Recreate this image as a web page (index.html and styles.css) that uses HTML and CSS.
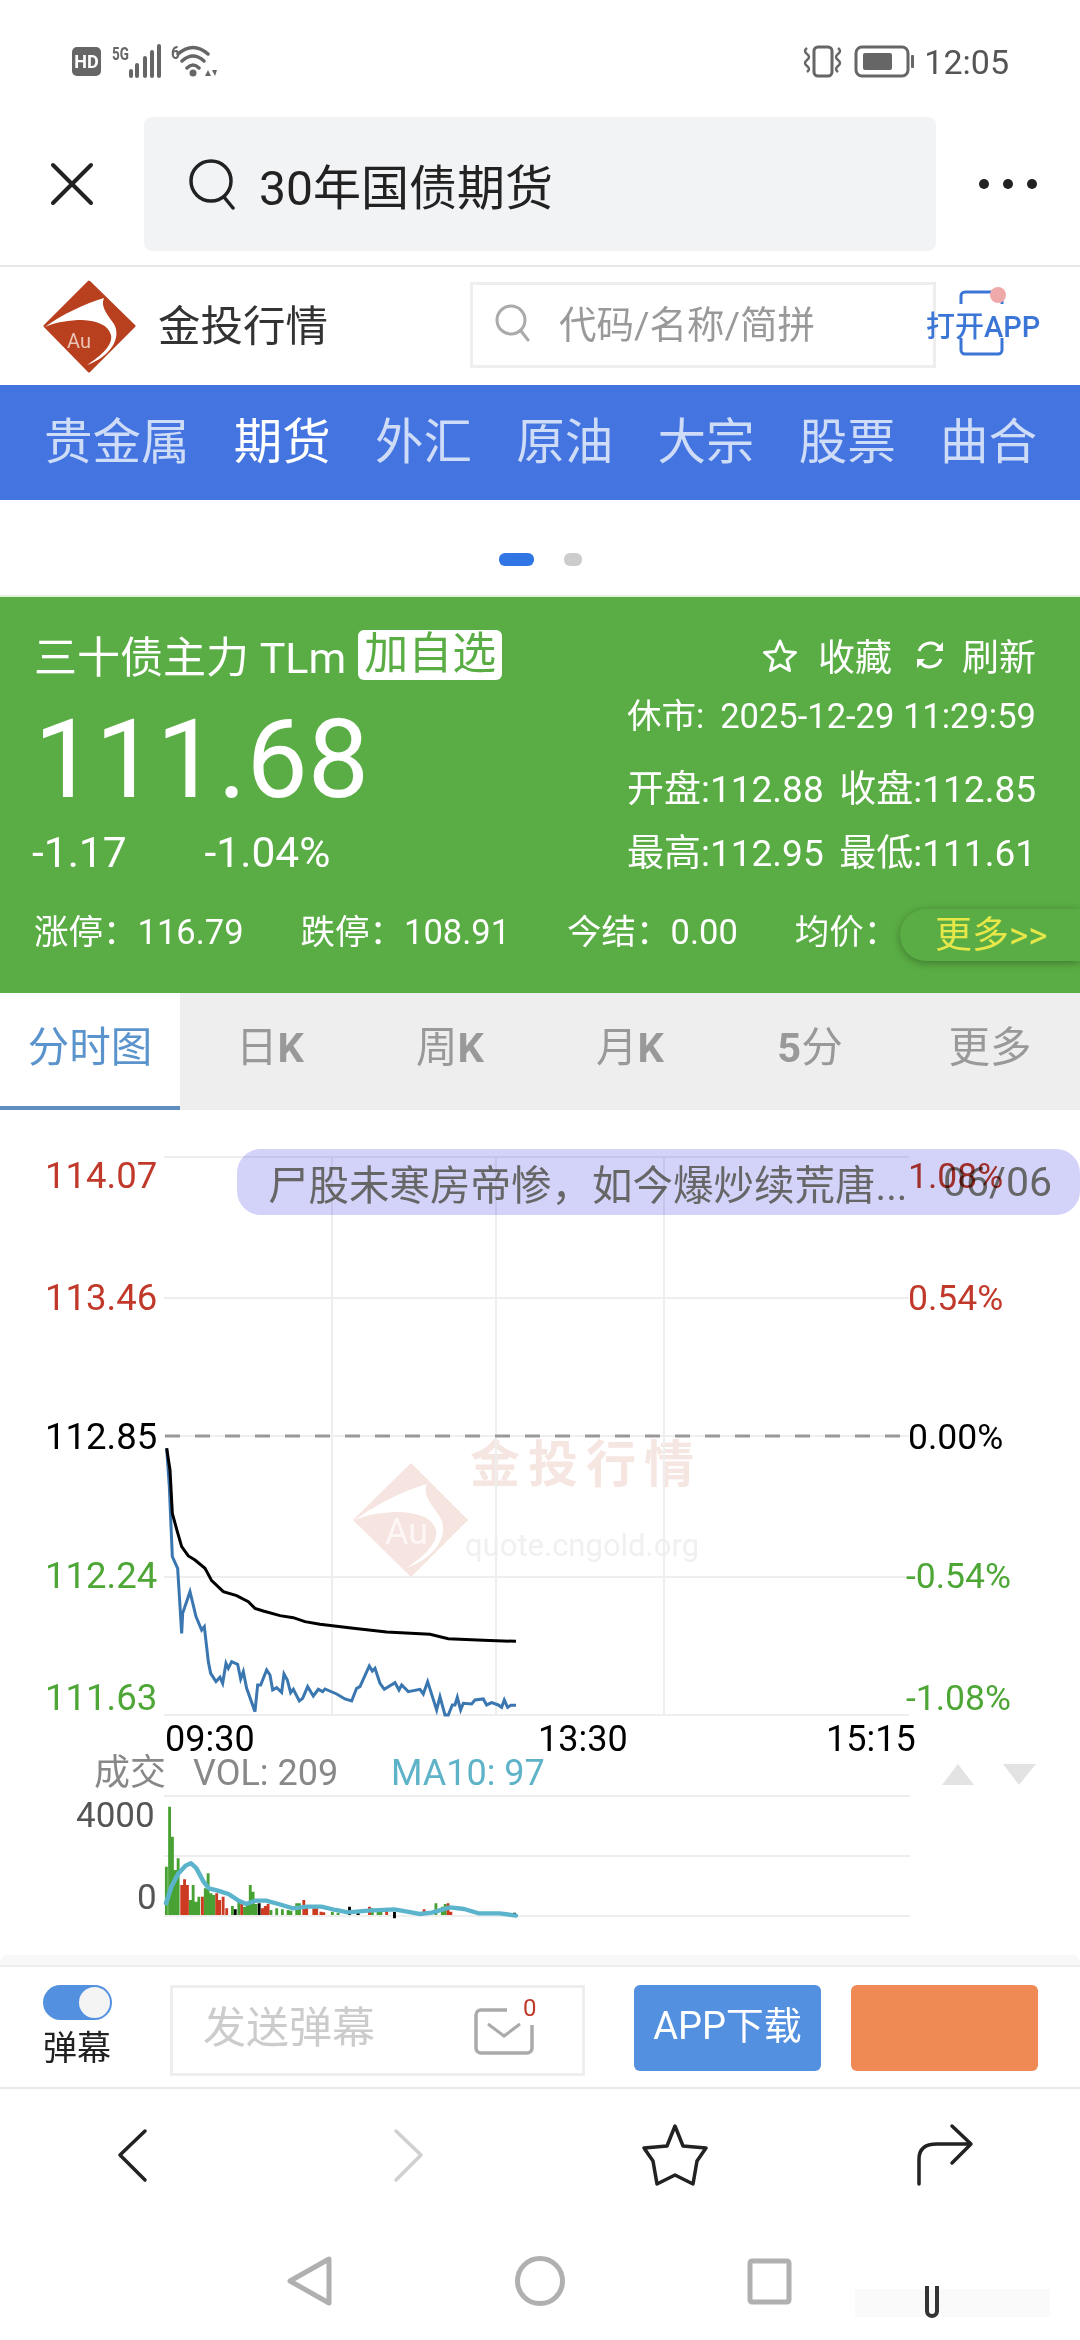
FILE: index.html
```html
<!DOCTYPE html>
<html lang="zh-CN">
<head>
  <meta charset="UTF-8">
  <meta name="viewport" content="width=device-width, initial-scale=1.0">
  <title>30年国债期货</title>
  <link rel="stylesheet" href="styles.css">
</head>
<body>
  <!-- status bar -->
  <div class="status">
    <svg class="status-left" width="146" height="36" viewBox="0 0 146 36">
      <rect x="1" y="3" width="29" height="29" rx="5" fill="#666"/>
      <text x="15.5" y="24" class="st-hd">HD</text>
      <text transform="translate(41 16) scale(.75 1)" class="st-small">5G</text>
      <path d="M60 27v5M66 21v11M74 14v18M81 8v24M88 2v30" stroke="#666" stroke-width="4" stroke-linecap="round" fill="none"/>
      <text transform="translate(100 15) scale(.85 1)" class="st-small">6</text>
      <path d="M107 10Q122-3 137 10M111 17Q122 7 133 17M116 24Q122 18 128 24" stroke="#666" stroke-width="3.5" stroke-linecap="round" fill="none"/>
      <circle cx="122" cy="29" r="3.5" fill="#666"/>
      <path d="M134 32l3-6 3 6zM141 26l3 6 2-6z" fill="#666"/>
    </svg>
    <svg class="status-right" width="114" height="36" viewBox="0 0 114 36">
      <rect x="12" y="3" width="18" height="29" rx="4" fill="none" stroke="#666" stroke-width="3"/>
      <path d="M5 4q-4 3 0 6t0 6 0 6 0 6M36 4q4 3 0 6t0 6 0 6 0 6" fill="none" stroke="#666" stroke-width="2.5"/>
      <rect x="54" y="3" width="52" height="29" rx="6" fill="none" stroke="#666" stroke-width="3"/>
      <rect x="61" y="9" width="29" height="17" rx="2" fill="#666"/>
      <rect x="109" y="11" width="3" height="13" rx="1" fill="#666"/>
    </svg>
    <span class="clock">12:05</span>
  </div>

  <!-- browser bar -->
  <div class="browser">
    <div class="browser-side">
      <svg width="44" height="44" viewBox="0 0 44 44"><path d="M3 3L41 41M41 3L3 41" stroke="#222" stroke-width="4" stroke-linecap="round"/></svg>
    </div>
    <div class="browser-search">
      <svg width="48" height="52" viewBox="0 0 48 52"><circle cx="22" cy="23" r="20" fill="none" stroke="#222" stroke-width="3.5"/><path d="M35 39L44 50" stroke="#222" stroke-width="3.5" stroke-linecap="round"/></svg>
      <span>30年国债期货</span>
    </div>
    <div class="browser-side">
      <svg width="60" height="12" viewBox="0 0 60 12"><circle cx="6" cy="6" r="5" fill="#222"/><circle cx="30" cy="6" r="5" fill="#222"/><circle cx="54" cy="6" r="5" fill="#222"/></svg>
    </div>
  </div>

  <!-- site header -->
  <div class="site">
    <svg class="site-logo" width="95" height="93" viewBox="0 0 95 93">
      <path d="M47 2L92 46 47 91 3 46z" fill="#b8401f" stroke="#b8401f" stroke-width="3" stroke-linejoin="round"/>
      <path d="M3 47C19 35 44 23 62 18 58 27 66 35 72 44 80 58 68 77 45 85 60 75 71 65 69 55 66 45 56 41 40 40 28 40 14 42 3 47Z" fill="#fff"/>
      <text x="25" y="68" class="logo-au">Au</text>
    </svg>
    <span class="site-name">金投行情</span>
    <div class="site-search">
      <svg width="36" height="38" viewBox="0 0 36 38"><circle cx="16" cy="16" r="14" fill="none" stroke="#aaa" stroke-width="3"/><path d="M26 27L33 36" stroke="#aaa" stroke-width="3" stroke-linecap="round"/></svg>
      <span>代码/名称/简拼</span>
    </div>
    <div class="open-app">
      <svg class="open-frame" width="52" height="72" viewBox="0 0 52 72">
        <path d="M5 18V10a4 4 0 0 1 4-4H42a4 4 0 0 1 4 4V18M5 52V64a4 4 0 0 0 4 4H42a4 4 0 0 0 4-4V52" fill="none" stroke="#3b76d6" stroke-width="3"/>
        <circle cx="42" cy="9" r="8" fill="#f0a9a9"/>
      </svg>
      <span>打开APP</span>
    </div>
  </div>

  <!-- channels -->
  <div class="channels">
    <span>贵金属</span>
    <span class="on">期货</span>
    <span>外汇</span>
    <span>原油</span>
    <span>大宗</span>
    <span>股票</span>
    <span>曲合</span>
  </div>

  <div class="pager"><i class="pager-on"></i><i class="pager-off"></i></div>

  <!-- quote panel -->
  <div class="quote">
    <div class="q-top">
      <span class="q-title">三十债主力 TLm</span>
      <span class="q-add">加自选</span>
      <div class="q-actions">
        <svg width="36" height="34" viewBox="0 0 36 34"><path d="M18 3l4.500 10.500 11 1-8.500 7.500 2.500 10.500L18 27l-9.500 5.500L11 22l-8.500-7.500 11-1z" fill="none" stroke="#fff" stroke-width="3" stroke-linejoin="round"/></svg>
        <span class="q-act-text">收藏</span>
        <svg class="q-refresh" width="32" height="32" viewBox="0 0 32 32"><path d="M5 12A12 12 0 0 1 26 9M27 20A12 12 0 0 1 6 23" fill="none" stroke="#fff" stroke-width="3"/><path d="M29 3v9h-8zM3 29v-9h8z" fill="#fff"/></svg>
        <span class="q-act-text">刷新</span>
      </div>
    </div>
    <div class="q-main">
      <div class="q-left">
        <div class="q-price">111.68</div>
        <div class="q-change"><span>-1.17</span><span>-1.04%</span></div>
      </div>
      <div class="q-stats">
        <div class="q-row q-time"><span>休市:</span><span>2025-12-29 11:29:59</span></div>
        <div class="q-row q-open"><span>开盘:112.88</span><span>收盘:112.85</span></div>
        <div class="q-row q-high"><span>最高:112.95</span><span>最低:111.61</span></div>
      </div>
    </div>
    <div class="q-bottom">
      <span>涨停：116.79</span>
      <span>跌停：108.91</span>
      <span>今结：0.00</span>
      <span>均价：</span>
    </div>
    <div class="q-more">更多&gt;&gt;</div>
  </div>

  <!-- period tabs -->
  <div class="tabs">
    <div class="tab active">分时图</div>
    <div class="tab">日<b>K</b></div>
    <div class="tab">周<b>K</b></div>
    <div class="tab">月<b>K</b></div>
    <div class="tab"><b>5</b>分</div>
    <div class="tab">更多</div>
  </div>

  <!-- chart -->
  <div class="chart">
    <svg class="chart-svg" width="1080" height="855" viewBox="0 1110 1080 855">
      <!-- watermark -->
      <path d="M411 1463L468 1520 411 1577 353 1520z" fill="#f6e4e0"/>
      <path d="M355 1520C375 1505 405 1490 427 1484 422 1495 432 1505 440 1517 450 1535 435 1558 407 1568 425 1555 438 1543 436 1530 432 1518 420 1513 400 1512 385 1512 368 1514 355 1520Z" fill="#fff"/>
      <text x="385" y="1544" class="wm-au">Au</text>
      <text x="470" y="1482" class="wm-name">金投行情</text>
      <text x="465" y="1556" class="wm-url">quote.cngold.org</text>

      <!-- grid -->
      <path d="M164 1157H909M164 1298H909M164 1436H909M164 1577H909M164 1715H909M332 1157V1715M496 1157V1715M664 1157V1715" class="grid"/>
      <path d="M165 1436H905" class="zero-line"/>

      <!-- price labels -->
      <text x="45" y="1188" class="lbl red">114.07</text>
      <text x="45" y="1310" class="lbl red">113.46</text>
      <text x="45" y="1449" class="lbl black">112.85</text>
      <text x="45" y="1588" class="lbl green">112.24</text>
      <text x="45" y="1710" class="lbl green">111.63</text>
      <text x="908" y="1188" class="lbl pct red">1.08%</text>
      <text x="908" y="1310" class="lbl pct red">0.54%</text>
      <text x="908" y="1449" class="lbl pct black">0.00%</text>
      <text x="906" y="1588" class="lbl pct green">-0.54%</text>
      <text x="906" y="1710" class="lbl pct green">-1.08%</text>

      <!-- price lines -->
      <g transform="translate(140 1420) scale(.3333)">
        <polyline class="line-price" points="80,85 88,200 97,410 113,445 125,640 128,580 150,515 168,590 185,630 193,620 205,725 212,760 228,785 240,772 248,790 258,730 265,745 275,725 293,733 302,777 310,755 320,805 345,875 353,795 362,795 380,750 390,765 398,810 410,803 425,817 432,762 442,780 452,818 460,808 478,843 488,835 503,800 520,828 535,808 548,815 555,807 590,822 615,837 635,843 650,805 660,800 688,738 697,753 705,745 720,790 733,808 765,788 777,810 785,795 805,815 840,808 850,822 863,785 890,870 900,830 915,885 925,885 937,855 945,855 952,832 962,870 970,850 995,852 1005,840 1030,837 1040,855 1055,848 1075,855 1085,862 1093,840 1103,862 1113,856 1128,856"/>
        <polyline class="line-avg" points="80,85 90,150 97,280 112,335 125,380 145,408 165,420 195,445 215,482 250,515 290,527 325,545 345,565 370,573 420,587 460,593 495,605 540,613 640,625 740,636 870,643 925,656 1030,661 1128,664"/>
      </g>

      <!-- time axis -->
      <text x="165" y="1751" class="time">09:30</text>
      <text x="538" y="1751" class="time">13:30</text>
      <text x="826" y="1751" class="time">15:15</text>

      <!-- volume -->
      <text x="94" y="1785" class="vol-head">成交</text>
      <text x="193" y="1785" class="vol-head">VOL: 209</text>
      <text x="391" y="1785" class="vol-head teal">MA10: 97</text>
      <path d="M942 1785L958 1764 974 1785zM1003 1764L1019 1785 1036 1764z" fill="#e3e3e3"/>
      <path d="M164 1796H910M164 1856H910M164 1916H910" class="grid"/>
      <text x="76" y="1827" class="vol-lbl">4000</text>
      <text x="137" y="1909" class="vol-lbl">0</text>
      <g transform="translate(0 1700) scale(.357 .3333)">
        <path class="bar bar-g" d="M466 500V645M475 320V645M483 410V645M491 510V645M499 475V645M533 600V645M541 555V645M549 605V645M557 590V645M575 565V645M583 520V645M591 580V645M599 585V645M651 618V645M669 605V645M685 620V645M693 612V645M701 555V645M709 575V645M717 612V645M759 630V645M775 625V645M791 628V645M807 630V645M815 632V645M831 610V645M839 610V645M931 635V645M947 638V645M1003 635V645M1043 625V645M1059 628V645M1067 630V645M1203 640V645M1221 610V645M1239 620V645M1247 612V645"/>
        <path class="bar bar-r" d="M509 555V645M517 538V645M525 555V645M567 590V645M607 580V645M615 600V645M625 590V645M635 625V645M677 612V645M735 625V645M743 618V645M751 612V645M851 600V645M859 620V645M879 625V645M887 625V645M899 635V645M907 637V645M1035 620V645M1083 632V645M1188 628V645M1255 610V645M1263 635V645"/>
        <path class="bar bar-k" d="M659 628V645M726 610V645M979 620V645M1003 640V645M1105 636V655M1441 638V645"/>
        <polyline class="line-ma" points="465,610 480,560 500,520 520,497 535,490 550,505 570,545 585,565 610,572 640,582 670,603 690,612 715,602 745,602 780,612 820,625 860,620 900,620 940,630 975,637 1030,632 1105,628 1140,635 1175,642 1210,638 1260,622 1300,627 1340,640 1400,640 1445,647"/>
      </g>
    </svg>
    <div class="danmaku">
      <span class="danmaku-text">尸股未寒房帝惨，如今爆炒续荒唐...</span>
      <span class="danmaku-date">06/06</span>
    </div>
    <div class="chart-edge"></div>
  </div>

  <!-- action bar -->
  <div class="action">
    <div class="barrage">
      <span class="switch"><i></i></span>
      <span class="barrage-text">弹幕</span>
    </div>
    <div class="send">
      <span class="send-hint">发送弹幕</span>
      <svg class="send-mail" width="64" height="62" viewBox="0 0 64 62">
        <path d="M34 15H8a5 5 0 0 0-5 5V53a5 5 0 0 0 5 5H54a5 5 0 0 0 5-5V30" fill="none" stroke="#aaa" stroke-width="3.500"/>
        <path d="M15 29L31 41 47 29" fill="none" stroke="#aaa" stroke-width="3"/>
        <text x="50" y="21" class="mail-count">0</text>
      </svg>
    </div>
    <div class="btn btn-blue">APP下载</div>
    <div class="btn btn-orange"></div>
  </div>

  <!-- browser toolbar -->
  <div class="toolbar">
    <svg width="1080" height="132" viewBox="0 2090 1080 132">
      <path d="M145 2132L120 2156 145 2181" class="tool"/>
      <path d="M396 2132L421 2156 396 2181" class="tool tool-off"/>
      <path d="M675 2127L683 2147 706 2149 697 2162 693 2185 675 2176 657 2185 653 2162 644 2149 667 2147z" class="tool"/>
      <path d="M919 2185V2160Q919 2145 937 2145H971M952 2127L971 2145 952 2164" class="tool"/>
    </svg>
  </div>

  <!-- system navigation -->
  <div class="sysnav">
    <svg width="1080" height="118" viewBox="0 2222 1080 118">
      <path d="M329 2260V2304L290 2282z" class="sys"/>
      <circle cx="540" cy="2282" r="22.500" class="sys"/>
      <rect x="750" y="2262" width="39" height="41" rx="2" class="sys"/>
      <path d="M855 2290H1050V2318H855z" fill="#fafafa"/>
      <path d="M927 2287V2312a5 5 0 0 0 10 0V2287" fill="none" stroke="#333" stroke-width="4"/>
    </svg>
  </div>
</body>
</html>
```

FILE: styles.css
```css
* { box-sizing: border-box; }
html, body { margin: 0; padding: 0; }
body {
  width: 1080px;
  height: 2340px;
  overflow: hidden;
  background: #fff;
  font-family: Roboto, "Noto Sans CJK SC", sans-serif;
  color: #222;
}
svg { display: block; }
svg text { font-family: Roboto, "Noto Sans CJK SC", sans-serif; }

/* status bar */
.status { display: flex; align-items: flex-start; height: 117px; padding: 44px 71px 0 71px; }
.status-right { margin-left: auto; margin-right: 8px; }
.clock { font-size: 34px; line-height: 36px; color: #555; }
.st-hd { font-size: 18px; font-weight: 700; fill: #fff; text-anchor: middle; }
.st-small { font-size: 18px; font-weight: 700; fill: #666; }

/* browser bar */
.browser { display: flex; height: 150px; padding-bottom: 14px; border-bottom: 2px solid #e8e8e8; }
.browser-side { width: 144px; display: flex; align-items: center; justify-content: center; }
.browser-search {
  flex: 1;
  display: flex;
  align-items: center;
  gap: 22px;
  padding-left: 45px;
  background: #f2f3f5;
  border-radius: 8px;
  font-size: 48px;
}

/* site header */
.site { display: flex; align-items: center; height: 118px; padding-left: 42px; }
.site-name { margin-left: 21px; margin-bottom: 8px; font-size: 42.500px; color: #333; width: 170px; white-space: nowrap; }
.logo-au { font-size: 20px; fill: #ecc4b6; }
.site-search {
  display: flex;
  align-items: center;
  gap: 28px;
  width: 466px;
  height: 86px;
  margin-left: 142px;
  margin-top: -2px;
  padding-left: 22px;
  border: 3px solid #eee;
  font-size: 37.5px;
  color: #999;
}
.site-search svg { margin-bottom: 4px; }
.site-search span { margin-bottom: 8px; }
.open-app { position: relative; margin-left: -10px; margin-bottom: 4px; width: 114px; text-align: center; font-size: 29px; font-weight: 500; color: #3b76d6; white-space: nowrap; }
.open-frame { position: absolute; left: 30px; top: -17px; }
.open-app span { position: relative; }

/* channels */
.channels {
  display: flex;
  justify-content: space-between;
  align-items: center;
  height: 115px;
  padding: 0 43px 10px 44px;
  background: #4374e0;
  font-size: 48.500px;
  color: #cfdcf8;
}
.channels .on { color: #fff; }

.pager { display: flex; align-items: center; justify-content: center; gap: 30px; height: 95px; padding-top: 26px; padding-bottom: 2px; }
.pager i { display: block; height: 13px; }
.pager-on { width: 35px; background: #2f75e4; border-radius: 6px; }
.pager-off { width: 18px; background: #ccc; border-radius: 6px; }

/* quote panel */
.quote { position: relative; height: 398px; padding: 35px 44px 0 34px; background: #5aad44; border-top: 2px solid #e4f2df; color: #fff; }
.q-top { display: flex; align-items: center; height: 50px; margin-top: -2px; }
.q-title { margin-bottom: 3px; font-size: 43px; white-space: nowrap; }
.q-add { margin-left: 12px; height: 50px; padding: 0 6px; line-height: 48px; font-size: 44px; color: #5aad44; background: #fff; border-radius: 6px; white-space: nowrap; }
.q-actions { display: flex; align-items: center; margin-left: auto; font-size: 37px; white-space: nowrap; }
.q-act-text { margin-left: 20px; }
.q-refresh { margin-left: 22px; }
.q-refresh + .q-act-text { margin-left: 16px; }
.q-main { display: flex; justify-content: space-between; }
.q-price { margin-top: 30px; font-size: 109px; line-height: 100px; }
.q-change { display: flex; gap: 78px; margin-top: 23px; font-size: 42.500px; line-height: 40px; margin-left: -2px; }
.q-stats { width: 409px; padding-top: 16px; font-size: 37px; line-height: 40px; }
.q-time { font-size: 34.500px; }
.q-row { display: flex; justify-content: space-between; white-space: nowrap; }
.q-open { margin-top: 34px; }
.q-high { margin-top: 24px; }
.q-bottom { display: flex; gap: 57px; margin-top: 38px; font-size: 34.500px; line-height: 40px; white-space: nowrap; }
.q-more {
  position: absolute;
  right: 0;
  top: 312px;
  width: 180px;
  height: 52px;
  padding-left: 35px;
  line-height: 54px;
  font-size: 37px;
  color: #e6e84a;
  background: #5aad44;
  border-radius: 26px 0 0 26px;
  box-shadow: 0 2px 8px rgba(0, 0, 0, .3);
}

/* tabs */
.tabs { display: flex; height: 117px; background: #eee; }
.tab { width: 180px; padding-top: 28px; text-align: center; font-size: 41.500px; line-height: 54px; color: #999; }
.tab.active { background: #fff; color: #5b94cc; border-bottom: 4px solid #5e8fc0; }

/* chart */
.chart { position: relative; height: 855px; }
.chart-svg { position: absolute; left: 0; top: 0; }
.chart-edge { position: absolute; left: 0; right: 0; bottom: 0; height: 10px; background: #f8f8f8; border-radius: 8px 8px 0 0; }
.grid { fill: none; stroke: #eeeeee; stroke-width: 2; }
.zero-line { fill: none; stroke: #999; stroke-width: 3; stroke-dasharray: 15 15; }
.lbl { font-size: 36.500px; }
.lbl.pct { font-size: 35.500px; }
.red { fill: #c0392b; }
.black { fill: #000; }
.green { fill: #4da635; }
.line-price { fill: none; stroke: #3a76b0; stroke-width: 9; }
.line-avg { fill: none; stroke: #000; stroke-width: 9; }
.time { font-size: 36px; fill: #000; }
.vol-head { font-size: 36px; fill: #888; }
.vol-head.teal { fill: #5eb3c9; }
.vol-lbl { font-size: 35px; fill: #555; }
.bar { fill: none; stroke-width: 8; }
.bar-g { stroke: #47a233; }
.bar-r { stroke: #cc3a22; }
.bar-k { stroke: #000; }
.line-ma { fill: none; stroke: #5bb4cc; stroke-width: 13; stroke-linejoin: round; stroke-linecap: round; }
.wm-au { font-size: 36px; fill: #fdf6f4; }
.wm-name { font-size: 50px; font-weight: 700; letter-spacing: 8px; fill: #f6e6e2; }
.wm-url { font-size: 31px; fill: #f0f0f0; }
.danmaku {
  position: absolute;
  left: 237px;
  top: 39px;
  right: 0;
  height: 66px;
  display: flex;
  align-items: center;
  padding: 0 28px 0 31px;
  background: #d3d3fa;
  mix-blend-mode: multiply;
  border-radius: 24px;
  color: #666;
  white-space: nowrap;
}
.danmaku-text { font-size: 40.500px; }
.danmaku-date { margin-left: auto; font-size: 41px; }

/* action bar */
.action { display: flex; height: 124px; padding-top: 18px; border-top: 2px solid #eee; border-bottom: 2px solid #e8e8e8; }
.barrage { width: 170px; padding-left: 43px; }
.switch { display: block; position: relative; width: 69px; height: 35px; background: #5390e0; border-radius: 18px; }
.switch i { position: absolute; right: 2px; top: 2px; width: 31px; height: 31px; background: #f4f4f4; border-radius: 50%; }
.barrage-text { display: block; margin-top: 6px; font-size: 34px; line-height: 44px; }
.send { position: relative; width: 415px; height: 91px; padding-left: 30px; border: 3px solid #eee; }
.send-hint { font-size: 43px; line-height: 80px; color: #ccc; }
.send-mail { position: absolute; right: 45px; top: 7px; }
.mail-count { font-size: 24px; fill: #c0392b; }
.btn { width: 187px; height: 86px; border-radius: 6px; text-align: center; line-height: 82px; font-size: 38px; color: #fff; }
.btn-blue { margin-left: 49px; background: #5490e0; }
.btn-orange { margin-left: 30px; background: #ef8a55; }

/* toolbars */
.tool { fill: none; stroke: #222; stroke-width: 3.500; stroke-linejoin: round; stroke-linecap: round; }
.tool-off { stroke: #d0d0d0; }
.sys { fill: none; stroke: #b0b0b0; stroke-width: 5; stroke-linejoin: round; }
```
